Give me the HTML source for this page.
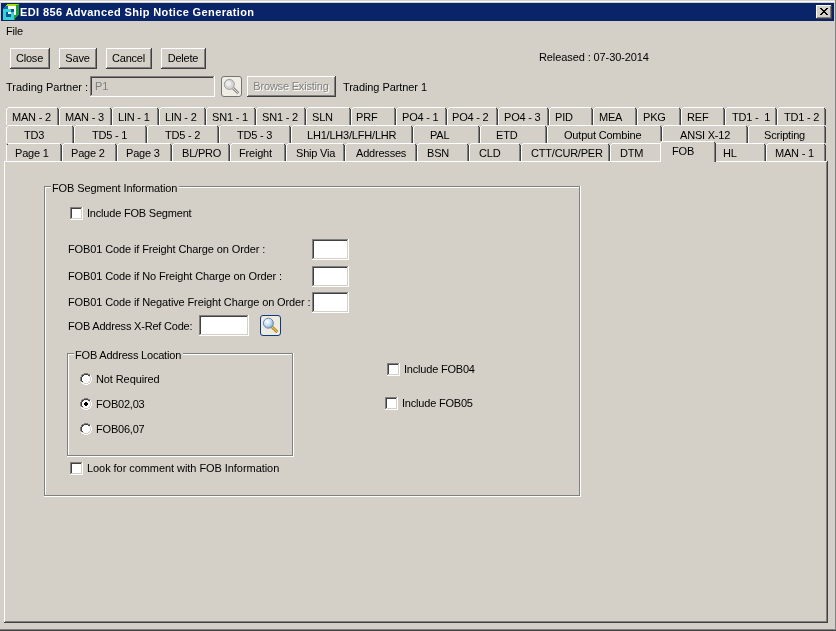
<!DOCTYPE html>
<html><head><meta charset="utf-8"><style>
html,body{margin:0;padding:0;width:836px;height:631px;overflow:hidden;background:#d4d0c8}
body>div,body>svg{position:absolute}
.t{position:absolute;font-family:"Liberation Sans",sans-serif;font-size:11px;line-height:13px;white-space:pre;color:#000;letter-spacing:-0.2px;will-change:transform}
</style></head><body>
<div style="left:0px;top:0px;width:836px;height:631px;background:#d4d0c8;"></div>
<div style="left:0px;top:1px;width:835px;height:1px;background:#ffffff;"></div>
<div style="left:835px;top:0px;width:1px;height:631px;background:#808080;"></div>
<div style="left:0px;top:629px;width:836px;height:1px;background:#808080;"></div>
<div style="left:0px;top:630px;width:836px;height:1px;background:#404040;"></div>
<div style="left:1px;top:3px;width:833px;height:18px;background:#0a246a;"></div>
<svg style="position:absolute;left:0px;top:0px" width="22" height="22" shape-rendering="crispEdges">
<rect x="7" y="4" width="11" height="1" fill="#a4dc0c"/>
<rect x="6" y="5" width="11" height="1" fill="#a4dc0c"/>
<rect x="17" y="4" width="2" height="1" fill="#6cc020"/>
<rect x="16" y="5" width="3" height="10" fill="#18a030"/>
<rect x="14" y="15" width="4" height="1" fill="#18a030"/>
<rect x="14" y="16" width="3" height="1" fill="#18a030"/>
<rect x="14" y="17" width="2" height="1" fill="#18a030"/>
<rect x="14" y="18" width="1" height="2" fill="#18a030"/>
<rect x="8" y="6" width="8" height="9" fill="#ffffff"/>
<rect x="5" y="6" width="3" height="1" fill="#0a70b0"/>
<rect x="4" y="7" width="4" height="1" fill="#0a70b0"/>
<rect x="3" y="8" width="5" height="1" fill="#0a70b0"/>
<rect x="3" y="9" width="11" height="11" fill="#38d4d4"/>
<rect x="11" y="9" width="3" height="3" fill="#0858a0"/>
<rect x="6" y="12" width="5" height="5" fill="#0858a0"/>
<rect x="8" y="12" width="3" height="2" fill="#ffffff"/>
</svg>
<div class="t" style="left:20px;top:6px;color:#fff;font-weight:bold;letter-spacing:0.38px">EDI 856 Advanced Ship Notice Generation</div>
<div style="left:816px;top:5px;width:16px;height:14px;background:#d4d0c8;"></div>
<div style="left:816px;top:5px;width:15px;height:1px;background:#ffffff;"></div>
<div style="left:816px;top:5px;width:1px;height:13px;background:#ffffff;"></div>
<div style="left:816px;top:18px;width:16px;height:1px;background:#404040;"></div>
<div style="left:831px;top:5px;width:1px;height:14px;background:#404040;"></div>
<div style="left:817px;top:17px;width:14px;height:1px;background:#808080;"></div>
<div style="left:830px;top:6px;width:1px;height:12px;background:#808080;"></div>
<svg style="position:absolute;left:816px;top:5px" width="16" height="14" shape-rendering="crispEdges">
<path d="M4 3h2v1h1v1h2v-1h1v-1h2v1h-1v1h-1v1h-1v1h1v1h1v1h1v1h-2v-1h-1v-1h-2v1h-1v1h-2v-1h1v-1h1v-1h1v-1h-1v-1h-1v-1h-1z" fill="#000"/>
</svg>
<div class="t" style="left:6px;top:25px;">File</div>
<div style="left:10px;top:48px;width:40px;height:21px;background:#d4d0c8;"></div>
<div style="left:10px;top:48px;width:39px;height:1px;background:#ffffff;"></div>
<div style="left:10px;top:48px;width:1px;height:20px;background:#ffffff;"></div>
<div style="left:10px;top:68px;width:40px;height:1px;background:#404040;"></div>
<div style="left:49px;top:48px;width:1px;height:21px;background:#404040;"></div>
<div style="left:11px;top:67px;width:38px;height:1px;background:#808080;"></div>
<div style="left:48px;top:49px;width:1px;height:19px;background:#808080;"></div>
<div class="t" style="left:10px;top:52px;width:39px;text-align:center;">Close</div>
<div style="left:59px;top:48px;width:38px;height:21px;background:#d4d0c8;"></div>
<div style="left:59px;top:48px;width:37px;height:1px;background:#ffffff;"></div>
<div style="left:59px;top:48px;width:1px;height:20px;background:#ffffff;"></div>
<div style="left:59px;top:68px;width:38px;height:1px;background:#404040;"></div>
<div style="left:96px;top:48px;width:1px;height:21px;background:#404040;"></div>
<div style="left:60px;top:67px;width:36px;height:1px;background:#808080;"></div>
<div style="left:95px;top:49px;width:1px;height:19px;background:#808080;"></div>
<div class="t" style="left:59px;top:52px;width:37px;text-align:center;">Save</div>
<div style="left:106px;top:48px;width:46px;height:21px;background:#d4d0c8;"></div>
<div style="left:106px;top:48px;width:45px;height:1px;background:#ffffff;"></div>
<div style="left:106px;top:48px;width:1px;height:20px;background:#ffffff;"></div>
<div style="left:106px;top:68px;width:46px;height:1px;background:#404040;"></div>
<div style="left:151px;top:48px;width:1px;height:21px;background:#404040;"></div>
<div style="left:107px;top:67px;width:44px;height:1px;background:#808080;"></div>
<div style="left:150px;top:49px;width:1px;height:19px;background:#808080;"></div>
<div class="t" style="left:106px;top:52px;width:45px;text-align:center;">Cancel</div>
<div style="left:161px;top:48px;width:45px;height:21px;background:#d4d0c8;"></div>
<div style="left:161px;top:48px;width:44px;height:1px;background:#ffffff;"></div>
<div style="left:161px;top:48px;width:1px;height:20px;background:#ffffff;"></div>
<div style="left:161px;top:68px;width:45px;height:1px;background:#404040;"></div>
<div style="left:205px;top:48px;width:1px;height:21px;background:#404040;"></div>
<div style="left:162px;top:67px;width:43px;height:1px;background:#808080;"></div>
<div style="left:204px;top:49px;width:1px;height:19px;background:#808080;"></div>
<div class="t" style="left:161px;top:52px;width:44px;text-align:center;">Delete</div>
<div class="t" style="left:539px;top:51px;letter-spacing:-0.1px">Released : 07-30-2014</div>
<div class="t" style="left:6px;top:81px;letter-spacing:0px">Trading Partner :</div>
<div style="left:90px;top:76px;width:125px;height:21px;background:#d4d0c8;"></div>
<div style="left:90px;top:76px;width:124px;height:1px;background:#808080;"></div>
<div style="left:90px;top:76px;width:1px;height:20px;background:#808080;"></div>
<div style="left:91px;top:77px;width:122px;height:1px;background:#404040;"></div>
<div style="left:91px;top:77px;width:1px;height:18px;background:#404040;"></div>
<div style="left:90px;top:96px;width:125px;height:1px;background:#ffffff;"></div>
<div style="left:214px;top:76px;width:1px;height:21px;background:#ffffff;"></div>
<div style="left:91px;top:95px;width:123px;height:1px;background:#d4d0c8;"></div>
<div style="left:213px;top:77px;width:1px;height:19px;background:#d4d0c8;"></div>
<div class="t" style="left:95px;top:80px;color:#808080">P1</div>
<svg style="position:absolute;left:221px;top:76px" width="21" height="21">
<rect x="0.5" y="0.5" width="20" height="20" rx="2.5" ry="2.5" fill="#f0ede2" stroke="#747474"/>
<line x1="12" y1="12" x2="17.3" y2="17.3" stroke="#8c8c8c" stroke-width="2.8"/>
<line x1="12" y1="12" x2="17" y2="17" stroke="#dcdcdc" stroke-width="1"/>
<circle cx="8.3" cy="8.4" r="5" fill="#d6d6d6" stroke="#9c9c9c"/>
<circle cx="7.6" cy="7.6" r="2.6" fill="#ececec"/>
</svg>
<div style="left:247px;top:76px;width:89px;height:21px;background:#d4d0c8;"></div>
<div style="left:247px;top:76px;width:88px;height:1px;background:#ffffff;"></div>
<div style="left:247px;top:76px;width:1px;height:20px;background:#ffffff;"></div>
<div style="left:247px;top:96px;width:89px;height:1px;background:#404040;"></div>
<div style="left:335px;top:76px;width:1px;height:21px;background:#404040;"></div>
<div style="left:248px;top:95px;width:87px;height:1px;background:#808080;"></div>
<div style="left:334px;top:77px;width:1px;height:19px;background:#808080;"></div>
<div class="t" style="left:247px;top:80px;width:88px;text-align:center;color:#808080;text-shadow:1px 1px 0 #fff">Browse Existing</div>
<div class="t" style="left:343px;top:81px;letter-spacing:-0.07px">Trading Partner 1</div>
<div style="left:4px;top:161px;width:824px;height:462px;background:#d4d0c8;"></div>
<div style="left:4px;top:161px;width:823px;height:1px;background:#ffffff;"></div>
<div style="left:4px;top:161px;width:1px;height:461px;background:#ffffff;"></div>
<div style="left:5px;top:621px;width:822px;height:1px;background:#808080;"></div>
<div style="left:826px;top:162px;width:1px;height:460px;background:#808080;"></div>
<div style="left:4px;top:622px;width:824px;height:1px;background:#404040;"></div>
<div style="left:827px;top:161px;width:1px;height:462px;background:#404040;"></div>
<div style="left:6px;top:107px;width:53px;height:18px;background:#d4d0c8;"></div>
<div style="left:6px;top:109px;width:1px;height:16px;background:#ffffff;"></div>
<div style="left:7px;top:108px;width:1px;height:1px;background:#ffffff;"></div>
<div style="left:8px;top:107px;width:49px;height:1px;background:#ffffff;"></div>
<div style="left:57px;top:108px;width:1px;height:1px;background:#404040;"></div>
<div style="left:57px;top:109px;width:1px;height:16px;background:#808080;"></div>
<div style="left:58px;top:109px;width:1px;height:16px;background:#404040;"></div>
<div class="t" style="left:12px;top:111px;">MAN - 2</div>
<div style="left:59px;top:107px;width:53px;height:18px;background:#d4d0c8;"></div>
<div style="left:59px;top:109px;width:1px;height:16px;background:#ffffff;"></div>
<div style="left:60px;top:108px;width:1px;height:1px;background:#ffffff;"></div>
<div style="left:61px;top:107px;width:49px;height:1px;background:#ffffff;"></div>
<div style="left:110px;top:108px;width:1px;height:1px;background:#404040;"></div>
<div style="left:110px;top:109px;width:1px;height:16px;background:#808080;"></div>
<div style="left:111px;top:109px;width:1px;height:16px;background:#404040;"></div>
<div class="t" style="left:65px;top:111px;">MAN - 3</div>
<div style="left:112px;top:107px;width:47px;height:18px;background:#d4d0c8;"></div>
<div style="left:112px;top:109px;width:1px;height:16px;background:#ffffff;"></div>
<div style="left:113px;top:108px;width:1px;height:1px;background:#ffffff;"></div>
<div style="left:114px;top:107px;width:43px;height:1px;background:#ffffff;"></div>
<div style="left:157px;top:108px;width:1px;height:1px;background:#404040;"></div>
<div style="left:157px;top:109px;width:1px;height:16px;background:#808080;"></div>
<div style="left:158px;top:109px;width:1px;height:16px;background:#404040;"></div>
<div class="t" style="left:118px;top:111px;">LIN - 1</div>
<div style="left:159px;top:107px;width:47px;height:18px;background:#d4d0c8;"></div>
<div style="left:159px;top:109px;width:1px;height:16px;background:#ffffff;"></div>
<div style="left:160px;top:108px;width:1px;height:1px;background:#ffffff;"></div>
<div style="left:161px;top:107px;width:43px;height:1px;background:#ffffff;"></div>
<div style="left:204px;top:108px;width:1px;height:1px;background:#404040;"></div>
<div style="left:204px;top:109px;width:1px;height:16px;background:#808080;"></div>
<div style="left:205px;top:109px;width:1px;height:16px;background:#404040;"></div>
<div class="t" style="left:165px;top:111px;">LIN - 2</div>
<div style="left:206px;top:107px;width:50px;height:18px;background:#d4d0c8;"></div>
<div style="left:206px;top:109px;width:1px;height:16px;background:#ffffff;"></div>
<div style="left:207px;top:108px;width:1px;height:1px;background:#ffffff;"></div>
<div style="left:208px;top:107px;width:46px;height:1px;background:#ffffff;"></div>
<div style="left:254px;top:108px;width:1px;height:1px;background:#404040;"></div>
<div style="left:254px;top:109px;width:1px;height:16px;background:#808080;"></div>
<div style="left:255px;top:109px;width:1px;height:16px;background:#404040;"></div>
<div class="t" style="left:212px;top:111px;">SN1 - 1</div>
<div style="left:256px;top:107px;width:50px;height:18px;background:#d4d0c8;"></div>
<div style="left:256px;top:109px;width:1px;height:16px;background:#ffffff;"></div>
<div style="left:257px;top:108px;width:1px;height:1px;background:#ffffff;"></div>
<div style="left:258px;top:107px;width:46px;height:1px;background:#ffffff;"></div>
<div style="left:304px;top:108px;width:1px;height:1px;background:#404040;"></div>
<div style="left:304px;top:109px;width:1px;height:16px;background:#808080;"></div>
<div style="left:305px;top:109px;width:1px;height:16px;background:#404040;"></div>
<div class="t" style="left:262px;top:111px;">SN1 - 2</div>
<div style="left:306px;top:107px;width:45px;height:18px;background:#d4d0c8;"></div>
<div style="left:306px;top:109px;width:1px;height:16px;background:#ffffff;"></div>
<div style="left:307px;top:108px;width:1px;height:1px;background:#ffffff;"></div>
<div style="left:308px;top:107px;width:41px;height:1px;background:#ffffff;"></div>
<div style="left:349px;top:108px;width:1px;height:1px;background:#404040;"></div>
<div style="left:349px;top:109px;width:1px;height:16px;background:#808080;"></div>
<div style="left:350px;top:109px;width:1px;height:16px;background:#404040;"></div>
<div class="t" style="left:312px;top:111px;">SLN</div>
<div style="left:351px;top:107px;width:45px;height:18px;background:#d4d0c8;"></div>
<div style="left:351px;top:109px;width:1px;height:16px;background:#ffffff;"></div>
<div style="left:352px;top:108px;width:1px;height:1px;background:#ffffff;"></div>
<div style="left:353px;top:107px;width:41px;height:1px;background:#ffffff;"></div>
<div style="left:394px;top:108px;width:1px;height:1px;background:#404040;"></div>
<div style="left:394px;top:109px;width:1px;height:16px;background:#808080;"></div>
<div style="left:395px;top:109px;width:1px;height:16px;background:#404040;"></div>
<div class="t" style="left:356px;top:111px;">PRF</div>
<div style="left:396px;top:107px;width:51px;height:18px;background:#d4d0c8;"></div>
<div style="left:396px;top:109px;width:1px;height:16px;background:#ffffff;"></div>
<div style="left:397px;top:108px;width:1px;height:1px;background:#ffffff;"></div>
<div style="left:398px;top:107px;width:47px;height:1px;background:#ffffff;"></div>
<div style="left:445px;top:108px;width:1px;height:1px;background:#404040;"></div>
<div style="left:445px;top:109px;width:1px;height:16px;background:#808080;"></div>
<div style="left:446px;top:109px;width:1px;height:16px;background:#404040;"></div>
<div class="t" style="left:402px;top:111px;">PO4 - 1</div>
<div style="left:447px;top:107px;width:51px;height:18px;background:#d4d0c8;"></div>
<div style="left:447px;top:109px;width:1px;height:16px;background:#ffffff;"></div>
<div style="left:448px;top:108px;width:1px;height:1px;background:#ffffff;"></div>
<div style="left:449px;top:107px;width:47px;height:1px;background:#ffffff;"></div>
<div style="left:496px;top:108px;width:1px;height:1px;background:#404040;"></div>
<div style="left:496px;top:109px;width:1px;height:16px;background:#808080;"></div>
<div style="left:497px;top:109px;width:1px;height:16px;background:#404040;"></div>
<div class="t" style="left:452px;top:111px;">PO4 - 2</div>
<div style="left:498px;top:107px;width:51px;height:18px;background:#d4d0c8;"></div>
<div style="left:498px;top:109px;width:1px;height:16px;background:#ffffff;"></div>
<div style="left:499px;top:108px;width:1px;height:1px;background:#ffffff;"></div>
<div style="left:500px;top:107px;width:47px;height:1px;background:#ffffff;"></div>
<div style="left:547px;top:108px;width:1px;height:1px;background:#404040;"></div>
<div style="left:547px;top:109px;width:1px;height:16px;background:#808080;"></div>
<div style="left:548px;top:109px;width:1px;height:16px;background:#404040;"></div>
<div class="t" style="left:504px;top:111px;">PO4 - 3</div>
<div style="left:549px;top:107px;width:44px;height:18px;background:#d4d0c8;"></div>
<div style="left:549px;top:109px;width:1px;height:16px;background:#ffffff;"></div>
<div style="left:550px;top:108px;width:1px;height:1px;background:#ffffff;"></div>
<div style="left:551px;top:107px;width:40px;height:1px;background:#ffffff;"></div>
<div style="left:591px;top:108px;width:1px;height:1px;background:#404040;"></div>
<div style="left:591px;top:109px;width:1px;height:16px;background:#808080;"></div>
<div style="left:592px;top:109px;width:1px;height:16px;background:#404040;"></div>
<div class="t" style="left:555px;top:111px;">PID</div>
<div style="left:593px;top:107px;width:44px;height:18px;background:#d4d0c8;"></div>
<div style="left:593px;top:109px;width:1px;height:16px;background:#ffffff;"></div>
<div style="left:594px;top:108px;width:1px;height:1px;background:#ffffff;"></div>
<div style="left:595px;top:107px;width:40px;height:1px;background:#ffffff;"></div>
<div style="left:635px;top:108px;width:1px;height:1px;background:#404040;"></div>
<div style="left:635px;top:109px;width:1px;height:16px;background:#808080;"></div>
<div style="left:636px;top:109px;width:1px;height:16px;background:#404040;"></div>
<div class="t" style="left:599px;top:111px;">MEA</div>
<div style="left:637px;top:107px;width:44px;height:18px;background:#d4d0c8;"></div>
<div style="left:637px;top:109px;width:1px;height:16px;background:#ffffff;"></div>
<div style="left:638px;top:108px;width:1px;height:1px;background:#ffffff;"></div>
<div style="left:639px;top:107px;width:40px;height:1px;background:#ffffff;"></div>
<div style="left:679px;top:108px;width:1px;height:1px;background:#404040;"></div>
<div style="left:679px;top:109px;width:1px;height:16px;background:#808080;"></div>
<div style="left:680px;top:109px;width:1px;height:16px;background:#404040;"></div>
<div class="t" style="left:643px;top:111px;">PKG</div>
<div style="left:681px;top:107px;width:44px;height:18px;background:#d4d0c8;"></div>
<div style="left:681px;top:109px;width:1px;height:16px;background:#ffffff;"></div>
<div style="left:682px;top:108px;width:1px;height:1px;background:#ffffff;"></div>
<div style="left:683px;top:107px;width:40px;height:1px;background:#ffffff;"></div>
<div style="left:723px;top:108px;width:1px;height:1px;background:#404040;"></div>
<div style="left:723px;top:109px;width:1px;height:16px;background:#808080;"></div>
<div style="left:724px;top:109px;width:1px;height:16px;background:#404040;"></div>
<div class="t" style="left:687px;top:111px;">REF</div>
<div style="left:725px;top:107px;width:52px;height:18px;background:#d4d0c8;"></div>
<div style="left:725px;top:109px;width:1px;height:16px;background:#ffffff;"></div>
<div style="left:726px;top:108px;width:1px;height:1px;background:#ffffff;"></div>
<div style="left:727px;top:107px;width:48px;height:1px;background:#ffffff;"></div>
<div style="left:775px;top:108px;width:1px;height:1px;background:#404040;"></div>
<div style="left:775px;top:109px;width:1px;height:16px;background:#808080;"></div>
<div style="left:776px;top:109px;width:1px;height:16px;background:#404040;"></div>
<div class="t" style="left:732px;top:111px;">TD1 -&nbsp; 1</div>
<div style="left:777px;top:107px;width:49px;height:18px;background:#d4d0c8;"></div>
<div style="left:777px;top:109px;width:1px;height:16px;background:#ffffff;"></div>
<div style="left:778px;top:108px;width:1px;height:1px;background:#ffffff;"></div>
<div style="left:779px;top:107px;width:45px;height:1px;background:#ffffff;"></div>
<div style="left:824px;top:108px;width:1px;height:1px;background:#404040;"></div>
<div style="left:824px;top:109px;width:1px;height:16px;background:#808080;"></div>
<div style="left:825px;top:109px;width:1px;height:16px;background:#404040;"></div>
<div class="t" style="left:784px;top:111px;">TD1 - 2</div>
<div style="left:6px;top:125px;width:68px;height:18px;background:#d4d0c8;"></div>
<div style="left:6px;top:127px;width:1px;height:16px;background:#ffffff;"></div>
<div style="left:7px;top:126px;width:1px;height:1px;background:#ffffff;"></div>
<div style="left:8px;top:125px;width:64px;height:1px;background:#ffffff;"></div>
<div style="left:72px;top:126px;width:1px;height:1px;background:#404040;"></div>
<div style="left:72px;top:127px;width:1px;height:16px;background:#808080;"></div>
<div style="left:73px;top:127px;width:1px;height:16px;background:#404040;"></div>
<div class="t" style="left:24px;top:129px;">TD3</div>
<div style="left:74px;top:125px;width:73px;height:18px;background:#d4d0c8;"></div>
<div style="left:74px;top:127px;width:1px;height:16px;background:#ffffff;"></div>
<div style="left:75px;top:126px;width:1px;height:1px;background:#ffffff;"></div>
<div style="left:76px;top:125px;width:69px;height:1px;background:#ffffff;"></div>
<div style="left:145px;top:126px;width:1px;height:1px;background:#404040;"></div>
<div style="left:145px;top:127px;width:1px;height:16px;background:#808080;"></div>
<div style="left:146px;top:127px;width:1px;height:16px;background:#404040;"></div>
<div class="t" style="left:92px;top:129px;">TD5 - 1</div>
<div style="left:147px;top:125px;width:72px;height:18px;background:#d4d0c8;"></div>
<div style="left:147px;top:127px;width:1px;height:16px;background:#ffffff;"></div>
<div style="left:148px;top:126px;width:1px;height:1px;background:#ffffff;"></div>
<div style="left:149px;top:125px;width:68px;height:1px;background:#ffffff;"></div>
<div style="left:217px;top:126px;width:1px;height:1px;background:#404040;"></div>
<div style="left:217px;top:127px;width:1px;height:16px;background:#808080;"></div>
<div style="left:218px;top:127px;width:1px;height:16px;background:#404040;"></div>
<div class="t" style="left:165px;top:129px;">TD5 - 2</div>
<div style="left:219px;top:125px;width:72px;height:18px;background:#d4d0c8;"></div>
<div style="left:219px;top:127px;width:1px;height:16px;background:#ffffff;"></div>
<div style="left:220px;top:126px;width:1px;height:1px;background:#ffffff;"></div>
<div style="left:221px;top:125px;width:68px;height:1px;background:#ffffff;"></div>
<div style="left:289px;top:126px;width:1px;height:1px;background:#404040;"></div>
<div style="left:289px;top:127px;width:1px;height:16px;background:#808080;"></div>
<div style="left:290px;top:127px;width:1px;height:16px;background:#404040;"></div>
<div class="t" style="left:237px;top:129px;">TD5 - 3</div>
<div style="left:291px;top:125px;width:122px;height:18px;background:#d4d0c8;"></div>
<div style="left:291px;top:127px;width:1px;height:16px;background:#ffffff;"></div>
<div style="left:292px;top:126px;width:1px;height:1px;background:#ffffff;"></div>
<div style="left:293px;top:125px;width:118px;height:1px;background:#ffffff;"></div>
<div style="left:411px;top:126px;width:1px;height:1px;background:#404040;"></div>
<div style="left:411px;top:127px;width:1px;height:16px;background:#808080;"></div>
<div style="left:412px;top:127px;width:1px;height:16px;background:#404040;"></div>
<div class="t" style="left:307px;top:129px;">LH1/LH3/LFH/LHR</div>
<div style="left:413px;top:125px;width:67px;height:18px;background:#d4d0c8;"></div>
<div style="left:413px;top:127px;width:1px;height:16px;background:#ffffff;"></div>
<div style="left:414px;top:126px;width:1px;height:1px;background:#ffffff;"></div>
<div style="left:415px;top:125px;width:63px;height:1px;background:#ffffff;"></div>
<div style="left:478px;top:126px;width:1px;height:1px;background:#404040;"></div>
<div style="left:478px;top:127px;width:1px;height:16px;background:#808080;"></div>
<div style="left:479px;top:127px;width:1px;height:16px;background:#404040;"></div>
<div class="t" style="left:430px;top:129px;">PAL</div>
<div style="left:480px;top:125px;width:67px;height:18px;background:#d4d0c8;"></div>
<div style="left:480px;top:127px;width:1px;height:16px;background:#ffffff;"></div>
<div style="left:481px;top:126px;width:1px;height:1px;background:#ffffff;"></div>
<div style="left:482px;top:125px;width:63px;height:1px;background:#ffffff;"></div>
<div style="left:545px;top:126px;width:1px;height:1px;background:#404040;"></div>
<div style="left:545px;top:127px;width:1px;height:16px;background:#808080;"></div>
<div style="left:546px;top:127px;width:1px;height:16px;background:#404040;"></div>
<div class="t" style="left:496px;top:129px;">ETD</div>
<div style="left:547px;top:125px;width:115px;height:18px;background:#d4d0c8;"></div>
<div style="left:547px;top:127px;width:1px;height:16px;background:#ffffff;"></div>
<div style="left:548px;top:126px;width:1px;height:1px;background:#ffffff;"></div>
<div style="left:549px;top:125px;width:111px;height:1px;background:#ffffff;"></div>
<div style="left:660px;top:126px;width:1px;height:1px;background:#404040;"></div>
<div style="left:660px;top:127px;width:1px;height:16px;background:#808080;"></div>
<div style="left:661px;top:127px;width:1px;height:16px;background:#404040;"></div>
<div class="t" style="left:564px;top:129px;">Output Combine</div>
<div style="left:662px;top:125px;width:86px;height:18px;background:#d4d0c8;"></div>
<div style="left:662px;top:127px;width:1px;height:16px;background:#ffffff;"></div>
<div style="left:663px;top:126px;width:1px;height:1px;background:#ffffff;"></div>
<div style="left:664px;top:125px;width:82px;height:1px;background:#ffffff;"></div>
<div style="left:746px;top:126px;width:1px;height:1px;background:#404040;"></div>
<div style="left:746px;top:127px;width:1px;height:16px;background:#808080;"></div>
<div style="left:747px;top:127px;width:1px;height:16px;background:#404040;"></div>
<div class="t" style="left:680px;top:129px;">ANSI X-12</div>
<div style="left:748px;top:125px;width:78px;height:18px;background:#d4d0c8;"></div>
<div style="left:748px;top:127px;width:1px;height:16px;background:#ffffff;"></div>
<div style="left:749px;top:126px;width:1px;height:1px;background:#ffffff;"></div>
<div style="left:750px;top:125px;width:74px;height:1px;background:#ffffff;"></div>
<div style="left:824px;top:126px;width:1px;height:1px;background:#404040;"></div>
<div style="left:824px;top:127px;width:1px;height:16px;background:#808080;"></div>
<div style="left:825px;top:127px;width:1px;height:16px;background:#404040;"></div>
<div class="t" style="left:764px;top:129px;">Scripting</div>
<div style="left:6px;top:143px;width:56px;height:18px;background:#d4d0c8;"></div>
<div style="left:6px;top:145px;width:1px;height:16px;background:#ffffff;"></div>
<div style="left:7px;top:144px;width:1px;height:1px;background:#ffffff;"></div>
<div style="left:8px;top:143px;width:52px;height:1px;background:#ffffff;"></div>
<div style="left:60px;top:144px;width:1px;height:1px;background:#404040;"></div>
<div style="left:60px;top:145px;width:1px;height:16px;background:#808080;"></div>
<div style="left:61px;top:145px;width:1px;height:16px;background:#404040;"></div>
<div class="t" style="left:15px;top:147px;">Page 1</div>
<div style="left:62px;top:143px;width:55px;height:18px;background:#d4d0c8;"></div>
<div style="left:62px;top:145px;width:1px;height:16px;background:#ffffff;"></div>
<div style="left:63px;top:144px;width:1px;height:1px;background:#ffffff;"></div>
<div style="left:64px;top:143px;width:51px;height:1px;background:#ffffff;"></div>
<div style="left:115px;top:144px;width:1px;height:1px;background:#404040;"></div>
<div style="left:115px;top:145px;width:1px;height:16px;background:#808080;"></div>
<div style="left:116px;top:145px;width:1px;height:16px;background:#404040;"></div>
<div class="t" style="left:71px;top:147px;">Page 2</div>
<div style="left:117px;top:143px;width:55px;height:18px;background:#d4d0c8;"></div>
<div style="left:117px;top:145px;width:1px;height:16px;background:#ffffff;"></div>
<div style="left:118px;top:144px;width:1px;height:1px;background:#ffffff;"></div>
<div style="left:119px;top:143px;width:51px;height:1px;background:#ffffff;"></div>
<div style="left:170px;top:144px;width:1px;height:1px;background:#404040;"></div>
<div style="left:170px;top:145px;width:1px;height:16px;background:#808080;"></div>
<div style="left:171px;top:145px;width:1px;height:16px;background:#404040;"></div>
<div class="t" style="left:126px;top:147px;">Page 3</div>
<div style="left:172px;top:143px;width:58px;height:18px;background:#d4d0c8;"></div>
<div style="left:172px;top:145px;width:1px;height:16px;background:#ffffff;"></div>
<div style="left:173px;top:144px;width:1px;height:1px;background:#ffffff;"></div>
<div style="left:174px;top:143px;width:54px;height:1px;background:#ffffff;"></div>
<div style="left:228px;top:144px;width:1px;height:1px;background:#404040;"></div>
<div style="left:228px;top:145px;width:1px;height:16px;background:#808080;"></div>
<div style="left:229px;top:145px;width:1px;height:16px;background:#404040;"></div>
<div class="t" style="left:182px;top:147px;">BL/PRO</div>
<div style="left:230px;top:143px;width:56px;height:18px;background:#d4d0c8;"></div>
<div style="left:230px;top:145px;width:1px;height:16px;background:#ffffff;"></div>
<div style="left:231px;top:144px;width:1px;height:1px;background:#ffffff;"></div>
<div style="left:232px;top:143px;width:52px;height:1px;background:#ffffff;"></div>
<div style="left:284px;top:144px;width:1px;height:1px;background:#404040;"></div>
<div style="left:284px;top:145px;width:1px;height:16px;background:#808080;"></div>
<div style="left:285px;top:145px;width:1px;height:16px;background:#404040;"></div>
<div class="t" style="left:239px;top:147px;">Freight</div>
<div style="left:286px;top:143px;width:59px;height:18px;background:#d4d0c8;"></div>
<div style="left:286px;top:145px;width:1px;height:16px;background:#ffffff;"></div>
<div style="left:287px;top:144px;width:1px;height:1px;background:#ffffff;"></div>
<div style="left:288px;top:143px;width:55px;height:1px;background:#ffffff;"></div>
<div style="left:343px;top:144px;width:1px;height:1px;background:#404040;"></div>
<div style="left:343px;top:145px;width:1px;height:16px;background:#808080;"></div>
<div style="left:344px;top:145px;width:1px;height:16px;background:#404040;"></div>
<div class="t" style="left:296px;top:147px;">Ship Via</div>
<div style="left:345px;top:143px;width:72px;height:18px;background:#d4d0c8;"></div>
<div style="left:345px;top:145px;width:1px;height:16px;background:#ffffff;"></div>
<div style="left:346px;top:144px;width:1px;height:1px;background:#ffffff;"></div>
<div style="left:347px;top:143px;width:68px;height:1px;background:#ffffff;"></div>
<div style="left:415px;top:144px;width:1px;height:1px;background:#404040;"></div>
<div style="left:415px;top:145px;width:1px;height:16px;background:#808080;"></div>
<div style="left:416px;top:145px;width:1px;height:16px;background:#404040;"></div>
<div class="t" style="left:356px;top:147px;">Addresses</div>
<div style="left:417px;top:143px;width:52px;height:18px;background:#d4d0c8;"></div>
<div style="left:417px;top:145px;width:1px;height:16px;background:#ffffff;"></div>
<div style="left:418px;top:144px;width:1px;height:1px;background:#ffffff;"></div>
<div style="left:419px;top:143px;width:48px;height:1px;background:#ffffff;"></div>
<div style="left:467px;top:144px;width:1px;height:1px;background:#404040;"></div>
<div style="left:467px;top:145px;width:1px;height:16px;background:#808080;"></div>
<div style="left:468px;top:145px;width:1px;height:16px;background:#404040;"></div>
<div class="t" style="left:427px;top:147px;">BSN</div>
<div style="left:469px;top:143px;width:52px;height:18px;background:#d4d0c8;"></div>
<div style="left:469px;top:145px;width:1px;height:16px;background:#ffffff;"></div>
<div style="left:470px;top:144px;width:1px;height:1px;background:#ffffff;"></div>
<div style="left:471px;top:143px;width:48px;height:1px;background:#ffffff;"></div>
<div style="left:519px;top:144px;width:1px;height:1px;background:#404040;"></div>
<div style="left:519px;top:145px;width:1px;height:16px;background:#808080;"></div>
<div style="left:520px;top:145px;width:1px;height:16px;background:#404040;"></div>
<div class="t" style="left:479px;top:147px;">CLD</div>
<div style="left:521px;top:143px;width:89px;height:18px;background:#d4d0c8;"></div>
<div style="left:521px;top:145px;width:1px;height:16px;background:#ffffff;"></div>
<div style="left:522px;top:144px;width:1px;height:1px;background:#ffffff;"></div>
<div style="left:523px;top:143px;width:85px;height:1px;background:#ffffff;"></div>
<div style="left:608px;top:144px;width:1px;height:1px;background:#404040;"></div>
<div style="left:608px;top:145px;width:1px;height:16px;background:#808080;"></div>
<div style="left:609px;top:145px;width:1px;height:16px;background:#404040;"></div>
<div class="t" style="left:531px;top:147px;">CTT/CUR/PER</div>
<div style="left:610px;top:143px;width:52px;height:18px;background:#d4d0c8;"></div>
<div style="left:610px;top:145px;width:1px;height:16px;background:#ffffff;"></div>
<div style="left:611px;top:144px;width:1px;height:1px;background:#ffffff;"></div>
<div style="left:612px;top:143px;width:48px;height:1px;background:#ffffff;"></div>
<div style="left:660px;top:144px;width:1px;height:1px;background:#404040;"></div>
<div style="left:660px;top:145px;width:1px;height:16px;background:#808080;"></div>
<div style="left:661px;top:145px;width:1px;height:16px;background:#404040;"></div>
<div class="t" style="left:620px;top:147px;">DTM</div>
<div style="left:714px;top:143px;width:52px;height:18px;background:#d4d0c8;"></div>
<div style="left:714px;top:145px;width:1px;height:16px;background:#ffffff;"></div>
<div style="left:715px;top:144px;width:1px;height:1px;background:#ffffff;"></div>
<div style="left:716px;top:143px;width:48px;height:1px;background:#ffffff;"></div>
<div style="left:764px;top:144px;width:1px;height:1px;background:#404040;"></div>
<div style="left:764px;top:145px;width:1px;height:16px;background:#808080;"></div>
<div style="left:765px;top:145px;width:1px;height:16px;background:#404040;"></div>
<div class="t" style="left:723px;top:147px;">HL</div>
<div style="left:766px;top:143px;width:60px;height:18px;background:#d4d0c8;"></div>
<div style="left:766px;top:145px;width:1px;height:16px;background:#ffffff;"></div>
<div style="left:767px;top:144px;width:1px;height:1px;background:#ffffff;"></div>
<div style="left:768px;top:143px;width:56px;height:1px;background:#ffffff;"></div>
<div style="left:824px;top:144px;width:1px;height:1px;background:#404040;"></div>
<div style="left:824px;top:145px;width:1px;height:16px;background:#808080;"></div>
<div style="left:825px;top:145px;width:1px;height:16px;background:#404040;"></div>
<div class="t" style="left:775px;top:147px;">MAN - 1</div>
<div style="left:7px;top:144px;width:1px;height:1px;background:#404040;"></div>
<div style="left:660px;top:141px;width:56px;height:21px;background:#d4d0c8;"></div>
<div style="left:660px;top:143px;width:1px;height:19px;background:#ffffff;"></div>
<div style="left:661px;top:142px;width:1px;height:1px;background:#ffffff;"></div>
<div style="left:662px;top:141px;width:52px;height:1px;background:#ffffff;"></div>
<div style="left:714px;top:142px;width:1px;height:1px;background:#404040;"></div>
<div style="left:714px;top:143px;width:1px;height:19px;background:#808080;"></div>
<div style="left:715px;top:143px;width:1px;height:19px;background:#404040;"></div>
<div class="t" style="left:672px;top:145px;">FOB</div>
<div style="left:44px;top:186px;width:536px;height:1px;background:#808080;"></div>
<div style="left:44px;top:186px;width:1px;height:310px;background:#808080;"></div>
<div style="left:44px;top:496px;width:537px;height:1px;background:#ffffff;"></div>
<div style="left:580px;top:186px;width:1px;height:311px;background:#ffffff;"></div>
<div style="left:45px;top:187px;width:534px;height:1px;background:#ffffff;"></div>
<div style="left:45px;top:187px;width:1px;height:308px;background:#ffffff;"></div>
<div style="left:45px;top:495px;width:535px;height:1px;background:#808080;"></div>
<div style="left:579px;top:187px;width:1px;height:309px;background:#808080;"></div>
<div style="left:51px;top:180px;width:128px;height:12px;background:#d4d0c8;"></div>
<div class="t" style="left:52px;top:182px;letter-spacing:-0.11px">FOB Segment Information</div>
<div style="left:70px;top:207px;width:13px;height:13px;background:#ffffff;"></div>
<div style="left:70px;top:207px;width:12px;height:1px;background:#808080;"></div>
<div style="left:70px;top:207px;width:1px;height:12px;background:#808080;"></div>
<div style="left:71px;top:208px;width:10px;height:1px;background:#404040;"></div>
<div style="left:71px;top:208px;width:1px;height:10px;background:#404040;"></div>
<div style="left:70px;top:219px;width:13px;height:1px;background:#ffffff;"></div>
<div style="left:82px;top:207px;width:1px;height:13px;background:#ffffff;"></div>
<div style="left:71px;top:218px;width:11px;height:1px;background:#d4d0c8;"></div>
<div style="left:81px;top:208px;width:1px;height:11px;background:#d4d0c8;"></div>
<div class="t" style="left:87px;top:207px;">Include FOB Segment</div>
<div class="t" style="left:68px;top:243px;letter-spacing:-0.12px">FOB01 Code if Freight Charge on Order :</div>
<div style="left:312px;top:239px;width:37px;height:21px;background:#ffffff;"></div>
<div style="left:312px;top:239px;width:36px;height:1px;background:#808080;"></div>
<div style="left:312px;top:239px;width:1px;height:20px;background:#808080;"></div>
<div style="left:313px;top:240px;width:34px;height:1px;background:#404040;"></div>
<div style="left:313px;top:240px;width:1px;height:18px;background:#404040;"></div>
<div style="left:312px;top:259px;width:37px;height:1px;background:#ffffff;"></div>
<div style="left:348px;top:239px;width:1px;height:21px;background:#ffffff;"></div>
<div style="left:313px;top:258px;width:35px;height:1px;background:#d4d0c8;"></div>
<div style="left:347px;top:240px;width:1px;height:19px;background:#d4d0c8;"></div>
<div class="t" style="left:68px;top:270px;letter-spacing:-0.12px">FOB01 Code if No Freight Charge on Order :</div>
<div style="left:312px;top:266px;width:37px;height:21px;background:#ffffff;"></div>
<div style="left:312px;top:266px;width:36px;height:1px;background:#808080;"></div>
<div style="left:312px;top:266px;width:1px;height:20px;background:#808080;"></div>
<div style="left:313px;top:267px;width:34px;height:1px;background:#404040;"></div>
<div style="left:313px;top:267px;width:1px;height:18px;background:#404040;"></div>
<div style="left:312px;top:286px;width:37px;height:1px;background:#ffffff;"></div>
<div style="left:348px;top:266px;width:1px;height:21px;background:#ffffff;"></div>
<div style="left:313px;top:285px;width:35px;height:1px;background:#d4d0c8;"></div>
<div style="left:347px;top:267px;width:1px;height:19px;background:#d4d0c8;"></div>
<div class="t" style="left:68px;top:296px;letter-spacing:-0.12px">FOB01 Code if Negative Freight Charge on Order :</div>
<div style="left:312px;top:292px;width:37px;height:21px;background:#ffffff;"></div>
<div style="left:312px;top:292px;width:36px;height:1px;background:#808080;"></div>
<div style="left:312px;top:292px;width:1px;height:20px;background:#808080;"></div>
<div style="left:313px;top:293px;width:34px;height:1px;background:#404040;"></div>
<div style="left:313px;top:293px;width:1px;height:18px;background:#404040;"></div>
<div style="left:312px;top:312px;width:37px;height:1px;background:#ffffff;"></div>
<div style="left:348px;top:292px;width:1px;height:21px;background:#ffffff;"></div>
<div style="left:313px;top:311px;width:35px;height:1px;background:#d4d0c8;"></div>
<div style="left:347px;top:293px;width:1px;height:19px;background:#d4d0c8;"></div>
<div class="t" style="left:68px;top:320px;">FOB Address X-Ref Code:</div>
<div style="left:199px;top:315px;width:50px;height:21px;background:#ffffff;"></div>
<div style="left:199px;top:315px;width:49px;height:1px;background:#808080;"></div>
<div style="left:199px;top:315px;width:1px;height:20px;background:#808080;"></div>
<div style="left:200px;top:316px;width:47px;height:1px;background:#404040;"></div>
<div style="left:200px;top:316px;width:1px;height:18px;background:#404040;"></div>
<div style="left:199px;top:335px;width:50px;height:1px;background:#ffffff;"></div>
<div style="left:248px;top:315px;width:1px;height:21px;background:#ffffff;"></div>
<div style="left:200px;top:334px;width:48px;height:1px;background:#d4d0c8;"></div>
<div style="left:247px;top:316px;width:1px;height:19px;background:#d4d0c8;"></div>
<svg style="position:absolute;left:260px;top:315px" width="21" height="21">
<defs><radialGradient id="gl" cx="0.38" cy="0.35" r="0.7"><stop offset="0" stop-color="#ffffff"/><stop offset="0.55" stop-color="#c0dcf2"/><stop offset="1" stop-color="#7aa4d0"/></radialGradient></defs>
<rect x="0.5" y="0.5" width="20" height="20" rx="2.5" ry="2.5" fill="#efebe0" stroke="#0b3b7f"/>
<line x1="11.5" y1="11.5" x2="17.2" y2="17" stroke="#8a6a18" stroke-width="2.8"/>
<line x1="11.5" y1="11.5" x2="17" y2="16.8" stroke="#f0c840" stroke-width="1.4"/>
<circle cx="8.4" cy="8.2" r="5" fill="url(#gl)" stroke="#6a88b0" stroke-width="1"/>
</svg>
<div style="left:67px;top:353px;width:226px;height:1px;background:#808080;"></div>
<div style="left:67px;top:353px;width:1px;height:103px;background:#808080;"></div>
<div style="left:67px;top:456px;width:227px;height:1px;background:#ffffff;"></div>
<div style="left:293px;top:353px;width:1px;height:104px;background:#ffffff;"></div>
<div style="left:68px;top:354px;width:224px;height:1px;background:#ffffff;"></div>
<div style="left:68px;top:354px;width:1px;height:101px;background:#ffffff;"></div>
<div style="left:68px;top:455px;width:225px;height:1px;background:#808080;"></div>
<div style="left:292px;top:354px;width:1px;height:102px;background:#808080;"></div>
<div style="left:74px;top:347px;width:109px;height:12px;background:#d4d0c8;"></div>
<div class="t" style="left:75px;top:349px;">FOB Address Location</div>
<svg style="position:absolute;left:80px;top:373px" width="12" height="12" shape-rendering="crispEdges"><rect x="4" y="0" width="4" height="1" fill="#808080"/><rect x="2" y="1" width="2" height="1" fill="#808080"/><rect x="4" y="1" width="4" height="1" fill="#404040"/><rect x="8" y="1" width="2" height="1" fill="#808080"/><rect x="1" y="2" width="1" height="1" fill="#808080"/><rect x="2" y="2" width="2" height="1" fill="#404040"/><rect x="4" y="2" width="4" height="1" fill="#ffffff"/><rect x="8" y="2" width="2" height="1" fill="#404040"/><rect x="10" y="2" width="1" height="1" fill="#ffffff"/><rect x="1" y="3" width="1" height="1" fill="#808080"/><rect x="2" y="3" width="1" height="1" fill="#404040"/><rect x="3" y="3" width="6" height="1" fill="#ffffff"/><rect x="9" y="3" width="1" height="1" fill="#d4d0c8"/><rect x="10" y="3" width="1" height="1" fill="#ffffff"/><rect x="0" y="4" width="1" height="1" fill="#808080"/><rect x="1" y="4" width="1" height="1" fill="#404040"/><rect x="2" y="4" width="8" height="1" fill="#ffffff"/><rect x="10" y="4" width="1" height="1" fill="#d4d0c8"/><rect x="11" y="4" width="1" height="1" fill="#ffffff"/><rect x="0" y="5" width="1" height="1" fill="#808080"/><rect x="1" y="5" width="1" height="1" fill="#404040"/><rect x="2" y="5" width="8" height="1" fill="#ffffff"/><rect x="10" y="5" width="1" height="1" fill="#d4d0c8"/><rect x="11" y="5" width="1" height="1" fill="#ffffff"/><rect x="0" y="6" width="1" height="1" fill="#808080"/><rect x="1" y="6" width="1" height="1" fill="#404040"/><rect x="2" y="6" width="8" height="1" fill="#ffffff"/><rect x="10" y="6" width="1" height="1" fill="#d4d0c8"/><rect x="11" y="6" width="1" height="1" fill="#ffffff"/><rect x="0" y="7" width="1" height="1" fill="#808080"/><rect x="1" y="7" width="1" height="1" fill="#404040"/><rect x="2" y="7" width="8" height="1" fill="#ffffff"/><rect x="10" y="7" width="1" height="1" fill="#d4d0c8"/><rect x="11" y="7" width="1" height="1" fill="#ffffff"/><rect x="1" y="8" width="1" height="1" fill="#808080"/><rect x="2" y="8" width="1" height="1" fill="#404040"/><rect x="3" y="8" width="6" height="1" fill="#ffffff"/><rect x="9" y="8" width="1" height="1" fill="#d4d0c8"/><rect x="10" y="8" width="1" height="1" fill="#ffffff"/><rect x="1" y="9" width="1" height="1" fill="#ffffff"/><rect x="2" y="9" width="2" height="1" fill="#d4d0c8"/><rect x="4" y="9" width="4" height="1" fill="#ffffff"/><rect x="8" y="9" width="2" height="1" fill="#d4d0c8"/><rect x="10" y="9" width="1" height="1" fill="#ffffff"/><rect x="2" y="10" width="2" height="1" fill="#ffffff"/><rect x="4" y="10" width="4" height="1" fill="#d4d0c8"/><rect x="8" y="10" width="2" height="1" fill="#ffffff"/><rect x="4" y="11" width="4" height="1" fill="#ffffff"/></svg>
<div class="t" style="left:96px;top:373px;letter-spacing:-0.1px">Not Required</div>
<svg style="position:absolute;left:80px;top:398px" width="12" height="12" shape-rendering="crispEdges"><rect x="4" y="0" width="4" height="1" fill="#808080"/><rect x="2" y="1" width="2" height="1" fill="#808080"/><rect x="4" y="1" width="4" height="1" fill="#404040"/><rect x="8" y="1" width="2" height="1" fill="#808080"/><rect x="1" y="2" width="1" height="1" fill="#808080"/><rect x="2" y="2" width="2" height="1" fill="#404040"/><rect x="4" y="2" width="4" height="1" fill="#ffffff"/><rect x="8" y="2" width="2" height="1" fill="#404040"/><rect x="10" y="2" width="1" height="1" fill="#ffffff"/><rect x="1" y="3" width="1" height="1" fill="#808080"/><rect x="2" y="3" width="1" height="1" fill="#404040"/><rect x="3" y="3" width="6" height="1" fill="#ffffff"/><rect x="9" y="3" width="1" height="1" fill="#d4d0c8"/><rect x="10" y="3" width="1" height="1" fill="#ffffff"/><rect x="0" y="4" width="1" height="1" fill="#808080"/><rect x="1" y="4" width="1" height="1" fill="#404040"/><rect x="2" y="4" width="3" height="1" fill="#ffffff"/><rect x="5" y="4" width="2" height="1" fill="#000000"/><rect x="7" y="4" width="3" height="1" fill="#ffffff"/><rect x="10" y="4" width="1" height="1" fill="#d4d0c8"/><rect x="11" y="4" width="1" height="1" fill="#ffffff"/><rect x="0" y="5" width="1" height="1" fill="#808080"/><rect x="1" y="5" width="1" height="1" fill="#404040"/><rect x="2" y="5" width="2" height="1" fill="#ffffff"/><rect x="4" y="5" width="4" height="1" fill="#000000"/><rect x="8" y="5" width="2" height="1" fill="#ffffff"/><rect x="10" y="5" width="1" height="1" fill="#d4d0c8"/><rect x="11" y="5" width="1" height="1" fill="#ffffff"/><rect x="0" y="6" width="1" height="1" fill="#808080"/><rect x="1" y="6" width="1" height="1" fill="#404040"/><rect x="2" y="6" width="2" height="1" fill="#ffffff"/><rect x="4" y="6" width="4" height="1" fill="#000000"/><rect x="8" y="6" width="2" height="1" fill="#ffffff"/><rect x="10" y="6" width="1" height="1" fill="#d4d0c8"/><rect x="11" y="6" width="1" height="1" fill="#ffffff"/><rect x="0" y="7" width="1" height="1" fill="#808080"/><rect x="1" y="7" width="1" height="1" fill="#404040"/><rect x="2" y="7" width="3" height="1" fill="#ffffff"/><rect x="5" y="7" width="2" height="1" fill="#000000"/><rect x="7" y="7" width="3" height="1" fill="#ffffff"/><rect x="10" y="7" width="1" height="1" fill="#d4d0c8"/><rect x="11" y="7" width="1" height="1" fill="#ffffff"/><rect x="1" y="8" width="1" height="1" fill="#808080"/><rect x="2" y="8" width="1" height="1" fill="#404040"/><rect x="3" y="8" width="6" height="1" fill="#ffffff"/><rect x="9" y="8" width="1" height="1" fill="#d4d0c8"/><rect x="10" y="8" width="1" height="1" fill="#ffffff"/><rect x="1" y="9" width="1" height="1" fill="#ffffff"/><rect x="2" y="9" width="2" height="1" fill="#d4d0c8"/><rect x="4" y="9" width="4" height="1" fill="#ffffff"/><rect x="8" y="9" width="2" height="1" fill="#d4d0c8"/><rect x="10" y="9" width="1" height="1" fill="#ffffff"/><rect x="2" y="10" width="2" height="1" fill="#ffffff"/><rect x="4" y="10" width="4" height="1" fill="#d4d0c8"/><rect x="8" y="10" width="2" height="1" fill="#ffffff"/><rect x="4" y="11" width="4" height="1" fill="#ffffff"/></svg>
<div class="t" style="left:96px;top:398px;">FOB02,03</div>
<svg style="position:absolute;left:80px;top:423px" width="12" height="12" shape-rendering="crispEdges"><rect x="4" y="0" width="4" height="1" fill="#808080"/><rect x="2" y="1" width="2" height="1" fill="#808080"/><rect x="4" y="1" width="4" height="1" fill="#404040"/><rect x="8" y="1" width="2" height="1" fill="#808080"/><rect x="1" y="2" width="1" height="1" fill="#808080"/><rect x="2" y="2" width="2" height="1" fill="#404040"/><rect x="4" y="2" width="4" height="1" fill="#ffffff"/><rect x="8" y="2" width="2" height="1" fill="#404040"/><rect x="10" y="2" width="1" height="1" fill="#ffffff"/><rect x="1" y="3" width="1" height="1" fill="#808080"/><rect x="2" y="3" width="1" height="1" fill="#404040"/><rect x="3" y="3" width="6" height="1" fill="#ffffff"/><rect x="9" y="3" width="1" height="1" fill="#d4d0c8"/><rect x="10" y="3" width="1" height="1" fill="#ffffff"/><rect x="0" y="4" width="1" height="1" fill="#808080"/><rect x="1" y="4" width="1" height="1" fill="#404040"/><rect x="2" y="4" width="8" height="1" fill="#ffffff"/><rect x="10" y="4" width="1" height="1" fill="#d4d0c8"/><rect x="11" y="4" width="1" height="1" fill="#ffffff"/><rect x="0" y="5" width="1" height="1" fill="#808080"/><rect x="1" y="5" width="1" height="1" fill="#404040"/><rect x="2" y="5" width="8" height="1" fill="#ffffff"/><rect x="10" y="5" width="1" height="1" fill="#d4d0c8"/><rect x="11" y="5" width="1" height="1" fill="#ffffff"/><rect x="0" y="6" width="1" height="1" fill="#808080"/><rect x="1" y="6" width="1" height="1" fill="#404040"/><rect x="2" y="6" width="8" height="1" fill="#ffffff"/><rect x="10" y="6" width="1" height="1" fill="#d4d0c8"/><rect x="11" y="6" width="1" height="1" fill="#ffffff"/><rect x="0" y="7" width="1" height="1" fill="#808080"/><rect x="1" y="7" width="1" height="1" fill="#404040"/><rect x="2" y="7" width="8" height="1" fill="#ffffff"/><rect x="10" y="7" width="1" height="1" fill="#d4d0c8"/><rect x="11" y="7" width="1" height="1" fill="#ffffff"/><rect x="1" y="8" width="1" height="1" fill="#808080"/><rect x="2" y="8" width="1" height="1" fill="#404040"/><rect x="3" y="8" width="6" height="1" fill="#ffffff"/><rect x="9" y="8" width="1" height="1" fill="#d4d0c8"/><rect x="10" y="8" width="1" height="1" fill="#ffffff"/><rect x="1" y="9" width="1" height="1" fill="#ffffff"/><rect x="2" y="9" width="2" height="1" fill="#d4d0c8"/><rect x="4" y="9" width="4" height="1" fill="#ffffff"/><rect x="8" y="9" width="2" height="1" fill="#d4d0c8"/><rect x="10" y="9" width="1" height="1" fill="#ffffff"/><rect x="2" y="10" width="2" height="1" fill="#ffffff"/><rect x="4" y="10" width="4" height="1" fill="#d4d0c8"/><rect x="8" y="10" width="2" height="1" fill="#ffffff"/><rect x="4" y="11" width="4" height="1" fill="#ffffff"/></svg>
<div class="t" style="left:96px;top:423px;">FOB06,07</div>
<div style="left:387px;top:363px;width:13px;height:13px;background:#ffffff;"></div>
<div style="left:387px;top:363px;width:12px;height:1px;background:#808080;"></div>
<div style="left:387px;top:363px;width:1px;height:12px;background:#808080;"></div>
<div style="left:388px;top:364px;width:10px;height:1px;background:#404040;"></div>
<div style="left:388px;top:364px;width:1px;height:10px;background:#404040;"></div>
<div style="left:387px;top:375px;width:13px;height:1px;background:#ffffff;"></div>
<div style="left:399px;top:363px;width:1px;height:13px;background:#ffffff;"></div>
<div style="left:388px;top:374px;width:11px;height:1px;background:#d4d0c8;"></div>
<div style="left:398px;top:364px;width:1px;height:11px;background:#d4d0c8;"></div>
<div class="t" style="left:404px;top:363px;">Include FOB04</div>
<div style="left:385px;top:397px;width:13px;height:13px;background:#ffffff;"></div>
<div style="left:385px;top:397px;width:12px;height:1px;background:#808080;"></div>
<div style="left:385px;top:397px;width:1px;height:12px;background:#808080;"></div>
<div style="left:386px;top:398px;width:10px;height:1px;background:#404040;"></div>
<div style="left:386px;top:398px;width:1px;height:10px;background:#404040;"></div>
<div style="left:385px;top:409px;width:13px;height:1px;background:#ffffff;"></div>
<div style="left:397px;top:397px;width:1px;height:13px;background:#ffffff;"></div>
<div style="left:386px;top:408px;width:11px;height:1px;background:#d4d0c8;"></div>
<div style="left:396px;top:398px;width:1px;height:11px;background:#d4d0c8;"></div>
<div class="t" style="left:402px;top:397px;">Include FOB05</div>
<div style="left:70px;top:462px;width:13px;height:13px;background:#ffffff;"></div>
<div style="left:70px;top:462px;width:12px;height:1px;background:#808080;"></div>
<div style="left:70px;top:462px;width:1px;height:12px;background:#808080;"></div>
<div style="left:71px;top:463px;width:10px;height:1px;background:#404040;"></div>
<div style="left:71px;top:463px;width:1px;height:10px;background:#404040;"></div>
<div style="left:70px;top:474px;width:13px;height:1px;background:#ffffff;"></div>
<div style="left:82px;top:462px;width:1px;height:13px;background:#ffffff;"></div>
<div style="left:71px;top:473px;width:11px;height:1px;background:#d4d0c8;"></div>
<div style="left:81px;top:463px;width:1px;height:11px;background:#d4d0c8;"></div>
<div class="t" style="left:87px;top:462px;letter-spacing:-0.06px">Look for comment with FOB Information</div>
</body></html>
